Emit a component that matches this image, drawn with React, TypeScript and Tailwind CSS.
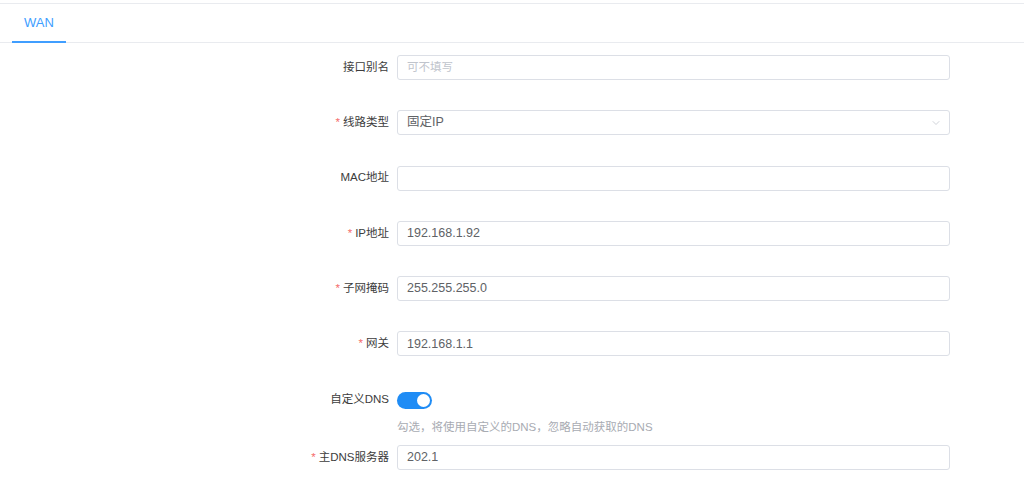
import { ChevronDown } from 'lucide-react'

type Field = {
  label: string
  required?: boolean
  value?: string
  placeholder?: string
  select?: boolean
}

const fields: Field[] = [
  { label: '接口别名', placeholder: '可不填写' },
  { label: '线路类型', required: true, value: '固定IP', select: true },
  { label: 'MAC地址', value: '' },
  { label: 'IP地址', required: true, value: '192.168.1.92' },
  { label: '子网掩码', required: true, value: '255.255.255.0' },
  { label: '网关', required: true, value: '192.168.1.1' },
]

function Label({ text, required }: { text: string; required?: boolean }) {
  return (
    <div className="w-[397px] shrink-0 pr-[8px] text-right text-[11.5px] text-[#3c3c3c]">
      {required && <span className="mr-[3px] text-[#f56c6c]">*</span>}
      {text}
    </div>
  )
}

function Input({ f }: { f: Field }) {
  return (
    <div className="relative flex h-[25px] w-[553px] items-center rounded-[3px] border border-[#dcdfe6] bg-white px-[9px] text-[12.5px]">
      {f.value ? (
        <span className="text-[#606266]">{f.value}</span>
      ) : (
        <span className="text-[11.5px] text-[#c0c4cc]">{f.placeholder ?? ''}</span>
      )}
      {f.select && (
        <ChevronDown className="absolute right-[7px] top-[6px] h-[12px] w-[12px] text-[#c0c4cc]" strokeWidth={1.5} />
      )}
    </div>
  )
}

export default function App() {
  return (
    <div
      className="h-[484px] w-[1024px] overflow-hidden bg-white"
      style={{ fontFamily: '"Liberation Sans", "Noto Sans CJK SC", sans-serif' }}
    >
      <div className="pt-[3px]">
        <div className="flex h-[40px] border-y border-[#e9ebef]">
          <div className="relative ml-[12px] flex w-[54px] items-center justify-center text-[13px] text-[#409eff]">
            WAN
            <div className="absolute bottom-[-1px] left-0 h-[2px] w-full bg-[#409eff]" />
          </div>
        </div>
      </div>

      <div className="flex flex-col gap-[30.3px] pt-[12px]">
        {fields.map((f) => (
          <div key={f.label} className="flex items-center">
            <Label text={f.label} required={f.required} />
            <Input f={f} />
          </div>
        ))}
      </div>

      <div className="mt-[35px] flex items-center">
        <Label text="自定义DNS" />
        <div className="relative h-[17px] w-[35px] rounded-full bg-[#1f8cf5]">
          <div className="absolute right-[2px] top-[2px] h-[13px] w-[13px] rounded-full bg-white" />
        </div>
      </div>
      <div className="mt-[10px] pl-[397px] text-[11.5px] text-[#a8abb2]">
        勾选，将使用自定义的DNS，忽略自动获取的DNS
      </div>
      <div className="mt-[9px] flex items-center">
        <Label text="主DNS服务器" required />
        <Input f={{ label: '主DNS服务器', value: '202.1' }} />
      </div>
    </div>
  )
}
